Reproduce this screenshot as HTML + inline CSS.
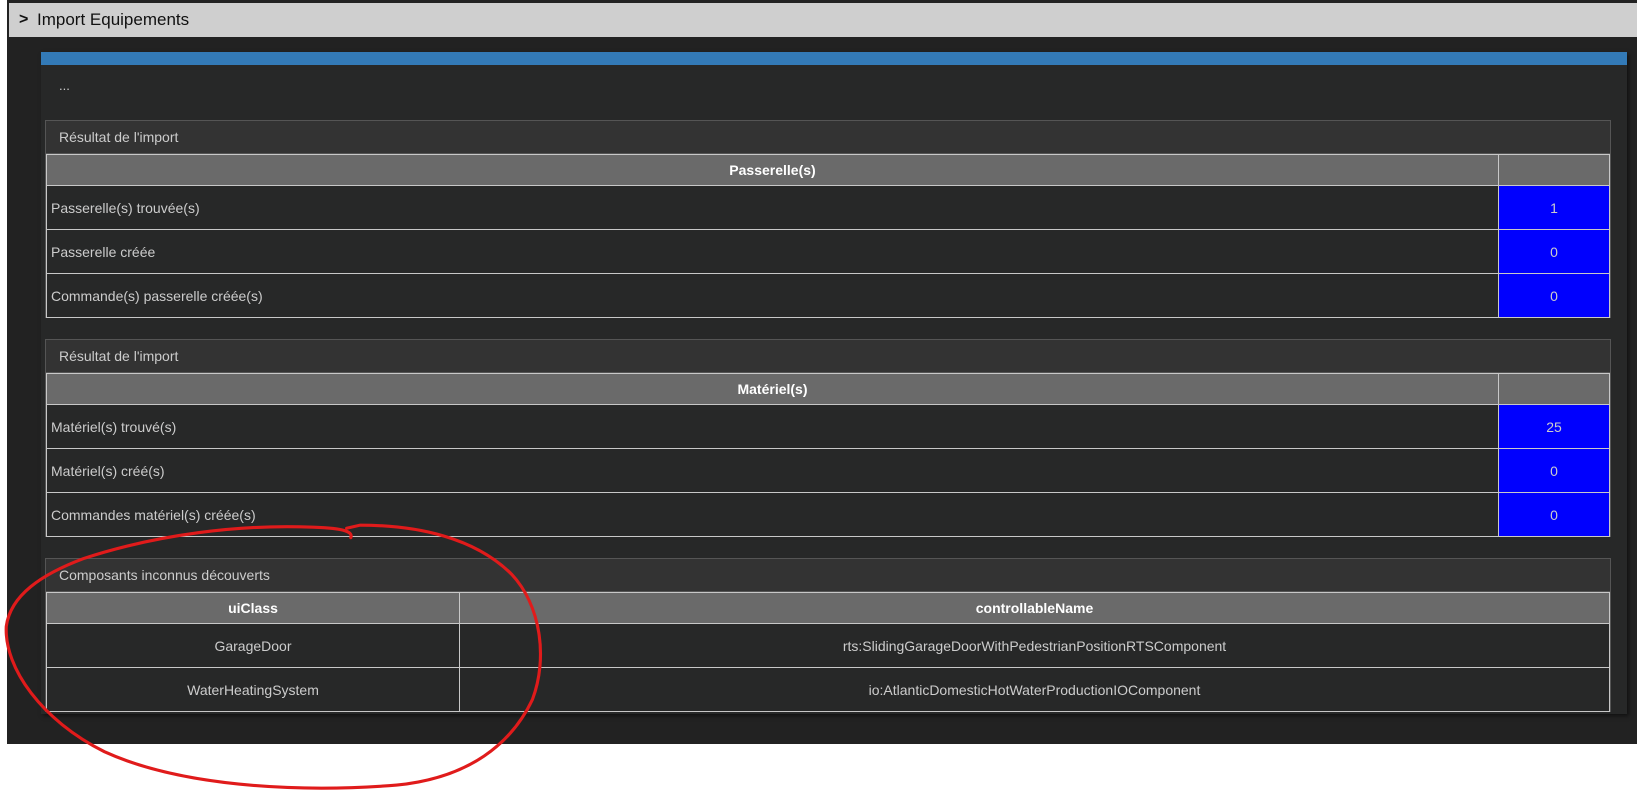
<!DOCTYPE html>
<html><head><meta charset="utf-8"><style>
*{box-sizing:border-box;margin:0;padding:0}
body{width:1637px;height:794px;background:#fff;position:relative;overflow:hidden;font-family:"Liberation Sans",Arial,sans-serif}
.frame{position:absolute;left:7px;top:0;width:1630px;height:744px;background:#222}
.title{position:absolute;left:9px;top:3px;width:1628px;height:34px;background:#cfcfcf;color:#111;font-size:17px;line-height:34px;padding-left:28px}
.title .chev{position:absolute;left:10px;top:0;font-weight:900;font-size:16px}
.panel{position:absolute;left:41px;top:52px;width:1586px;height:662px;background:#272828;box-shadow:2px 2px 4px rgba(0,0,0,.5)}
.blue{position:absolute;left:0;top:0;width:100%;height:13px;background:#337ab7}
.dots{position:absolute;left:18px;top:26px;color:#ccc;font-size:13px}
.box{position:absolute;left:4px;width:1566px;border:1px solid #555;border-bottom:none}
.bh{height:33px;background:#333;color:#ccc;font-size:14px;line-height:32px;padding-left:13px;border-bottom:1px solid #555}
table{border-collapse:collapse;width:100%;font-size:14px;color:#ccc}
td,th{border:1px solid #c8c8c8}
th{background:#6a6a6a;color:#fff;font-weight:bold;height:31px}
td{height:44px;padding-left:4px}
td.v{background:#0000fe;text-align:center;color:#ccc;width:111px;padding:0}
td.c{text-align:center;padding:0}
</style></head><body>
<div class="frame"></div>
<div class="title"><span class="chev">&gt;</span>Import Equipements</div>
<div class="panel">
<div class="blue"></div>
<div class="dots">...</div>
<div class="box" style="top:68px">
<div class="bh">Résultat de l'import</div>
<table><tr><th>Passerelle(s)</th><th style="width:111px"></th></tr>
<tr><td>Passerelle(s) trouvée(s)</td><td class="v">1</td></tr>
<tr><td>Passerelle créée</td><td class="v">0</td></tr>
<tr><td>Commande(s) passerelle créée(s)</td><td class="v">0</td></tr></table>
</div>
<div class="box" style="top:287px">
<div class="bh">Résultat de l'import</div>
<table><tr><th>Matériel(s)</th><th style="width:111px"></th></tr>
<tr><td>Matériel(s) trouvé(s)</td><td class="v">25</td></tr>
<tr><td>Matériel(s) créé(s)</td><td class="v">0</td></tr>
<tr><td>Commandes matériel(s) créée(s)</td><td class="v">0</td></tr></table>
</div>
<div class="box" style="top:506px">
<div class="bh">Composants inconnus découverts</div>
<table><tr><th style="width:413px">uiClass</th><th>controllableName</th></tr>
<tr><td class="c">GarageDoor</td><td class="c">rts:SlidingGarageDoorWithPedestrianPositionRTSComponent</td></tr>
<tr><td class="c">WaterHeatingSystem</td><td class="c">io:AtlanticDomesticHotWaterProductionIOComponent</td></tr></table>
</div>
</div>
<svg style="position:absolute;left:0;top:0" width="1637" height="794" viewBox="0 0 1568 760.5">
<path d="M336 515 C338 510 332 506 300 505 C230 502 150 512 80 535 C40 550 10 570 6 600 C4 640 40 690 100 720 C170 752 280 760 380 752 C450 745 490 712 510 670 C525 630 518 580 490 550 C455 515 400 503 345 503 L332 506" fill="none" stroke="#e01b1b" stroke-width="3" stroke-linecap="round"/>
</svg>
</body></html>
